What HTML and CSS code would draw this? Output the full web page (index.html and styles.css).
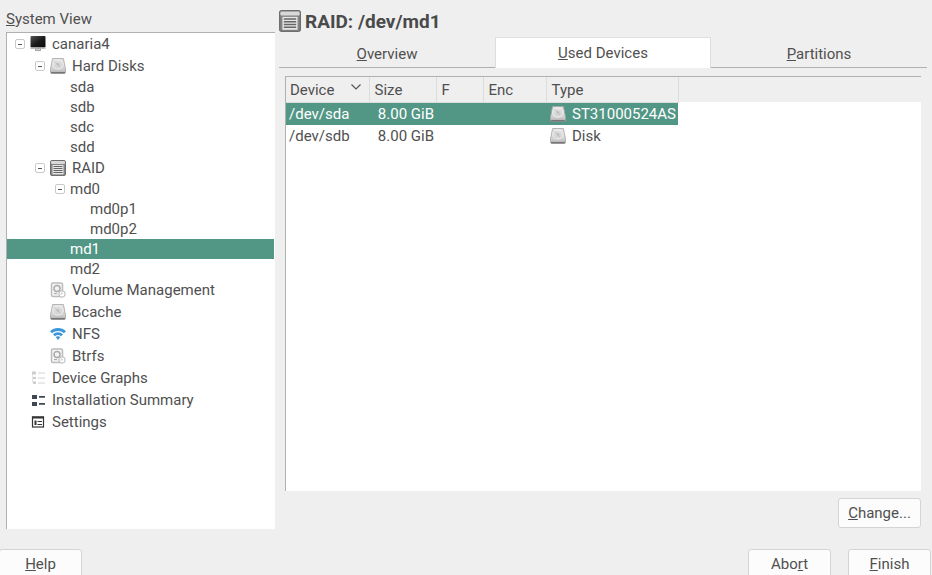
FILE: index.html
```html
<!DOCTYPE html>
<html lang="en">
<head>
  <meta charset="UTF-8">
  <title>Partitioner</title>
  <link rel="stylesheet" href="styles.css">
</head>
<body>
  <!-- Icon sprite -->
  <svg class="sprite" xmlns="http://www.w3.org/2000/svg">
    <defs>
      <linearGradient id="diskFill" x1="0" y1="0" x2="0" y2="1">
        <stop offset="0" stop-color="#e4e4e4"/>
        <stop offset="0.7" stop-color="#d2d2d2"/>
        <stop offset="1" stop-color="#aeaeae"/>
      </linearGradient>
      <linearGradient id="screenFill" x1="0" y1="0" x2="1" y2="1">
        <stop offset="0" stop-color="#555"/>
        <stop offset="0.5" stop-color="#1c1c1c"/>
        <stop offset="1" stop-color="#0c0c0c"/>
      </linearGradient>
      <symbol id="i-disk" viewBox="0 0 16 16">
        <path d="M2.600.500h10.800L15.500 11v3.300a1 1 0 0 1-1 1h-13a1 1 0 0 1-1-1V11z" fill="url(#diskFill)" stroke="#a6a6a6" stroke-width=".8"/>
        <ellipse cx="8" cy="6.400" rx="5.200" ry="4.600" fill="none" stroke="#f0f0f0" stroke-width=".9"/>
        <ellipse cx="8" cy="6.400" rx="1.600" ry="1.300" fill="#c4c4c4"/>
        <path d="M4.500 3 10 9" stroke="#b4b4b4" stroke-width=".6"/>
        <rect x="1" y="14" width="14" height="1.500" rx=".5" fill="#757575"/>
      </symbol>
      <symbol id="i-monitor" viewBox="0 0 16 16">
        <rect x=".5" y="0" width="15" height="11.5" rx="1" fill="url(#screenFill)"/>
        <rect x=".5" y="11.5" width="15" height="1.5" fill="#bdbdbd"/>
        <path d="M5.500 13h5v1.600h-5z" fill="none" stroke="#8a8a8a" stroke-width=".8"/>
      </symbol>
      <symbol id="i-raid" viewBox="0 0 16 16">
        <rect x=".5" y=".5" width="15" height="15" rx="1.500" fill="#858585" stroke="#6e6e6e"/>
        <rect x="1" y="1" width="14" height="3" rx="1" fill="#d8d8d8"/>
        <rect x="2.500" y="5" width="11" height="9.400" fill="#e6e6e6"/>
        <path d="M3.500 6.500h9M3.500 8.500h9M3.500 10.500h9M3.500 12.500h9" stroke="#666" stroke-width="1"/>
      </symbol>
      <symbol id="i-volume" viewBox="0 0 16 16">
        <rect x="1.500" y="1" width="11" height="13.500" rx="1.500" fill="#f4f4f4" stroke="#bcbcbc" stroke-width="1.500"/>
        <circle cx="7" cy="6.500" r="3" fill="none" stroke="#ababab" stroke-width="1.500"/>
        <path d="M4 11.500h3" stroke="#ababab" stroke-width="1.200"/>
        <circle cx="12" cy="12" r="3.200" fill="#fff" stroke="#b4b4b4" stroke-width="1"/>
        <path d="M12 10.500v1.500h-1.500" fill="none" stroke="#b4b4b4" stroke-width=".8"/>
      </symbol>
      <symbol id="i-wifi" viewBox="0 0 16 16">
        <path d="M0 5.300C4.500 1 11.500 1 16 5.300l-2.100 2C10.500 4.200 5.500 4.200 2.100 7.300z" fill="#3a97da"/>
        <path d="M3 8.300c3-2.700 7-2.700 10 0l-2 1.900c-1.900-1.500-4.100-1.500-6 0z" fill="#3a97da"/>
        <path d="M5.700 11c1.400-1 3.200-1 4.600 0L8 14z" fill="#3a97da"/>
      </symbol>
      <symbol id="i-graphs" viewBox="0 0 16 16">
        <path d="M2 1.500h4v3H2zM3 7h3v2H3zM3 11.500h3v2.500H3z" fill="#cdcdcd"/>
        <path d="M8 3h7M8 8h7M8 13h7" stroke="#d2d2d2" stroke-width="1"/>
        <path d="M2.500 4.500v8" stroke="#dcdcdc" stroke-width=".8"/>
      </symbol>
      <symbol id="i-summary" viewBox="0 0 16 16">
        <path d="M2 3h5v4H2zM2 10h5v4H2z" fill="#3f4852"/>
        <path d="M9 4h6v1.800H9zM9 11h6v1.800H9z" fill="#3f4852"/>
      </symbol>
      <symbol id="i-settings" viewBox="0 0 16 16">
        <rect x="2.500" y="3" width="11" height="10" fill="#fff" stroke="#333" stroke-width="1.200"/>
        <path d="M2 2.500h12v2H2z" fill="#333"/>
        <path d="M4.500 6.500h2v4.500h-2z" fill="#333"/>
        <path d="M7.500 7.500h4.500M7.500 10.500h4.500" stroke="#333" stroke-width="1"/>
      </symbol>
    </defs>
  </svg>

  <div class="main">
    <!-- Left side tree -->
    <div class="side">
      <div class="side-label"><u>S</u>ystem View</div>
      <div class="tree">
        <div class="row tall d0"><span class="exp"></span><svg class="ico"><use href="#i-monitor"/></svg>canaria4</div>
        <div class="row tall d1"><span class="exp"></span><svg class="ico"><use href="#i-disk"/></svg>Hard Disks</div>
        <div class="row d2"><span class="slot"></span>sda</div>
        <div class="row d2"><span class="slot"></span>sdb</div>
        <div class="row d2"><span class="slot"></span>sdc</div>
        <div class="row d2"><span class="slot"></span>sdd</div>
        <div class="row tall d1"><span class="exp"></span><svg class="ico"><use href="#i-raid"/></svg>RAID</div>
        <div class="row d2"><span class="exp"></span>md0</div>
        <div class="row d3"><span class="slot"></span>md0p1</div>
        <div class="row d3"><span class="slot"></span>md0p2</div>
        <div class="row d2 selected"><span class="slot"></span>md1</div>
        <div class="row d2"><span class="slot"></span>md2</div>
        <div class="row tall d1"><span class="slot"></span><svg class="ico"><use href="#i-volume"/></svg>Volume Management</div>
        <div class="row tall d1"><span class="slot"></span><svg class="ico"><use href="#i-disk"/></svg>Bcache</div>
        <div class="row tall d1"><span class="slot"></span><svg class="ico"><use href="#i-wifi"/></svg>NFS</div>
        <div class="row tall d1"><span class="slot"></span><svg class="ico"><use href="#i-volume"/></svg>Btrfs</div>
        <div class="row tall d0"><span class="slot"></span><svg class="ico"><use href="#i-graphs"/></svg>Device Graphs</div>
        <div class="row tall d0"><span class="slot"></span><svg class="ico"><use href="#i-summary"/></svg>Installation Summary</div>
        <div class="row tall d0"><span class="slot"></span><svg class="ico"><use href="#i-settings"/></svg>Settings</div>
      </div>
    </div>

    <!-- Right side content -->
    <div class="content">
      <div class="heading"><svg class="heading-ico"><use href="#i-raid"/></svg><h1>RAID: /dev/md1</h1></div>
      <div class="tabs">
        <div class="tab"><u>O</u>verview</div>
        <div class="tab active"><u>U</u>sed Devices</div>
        <div class="tab"><u>P</u>artitions</div>
      </div>
      <div class="panel">
        <div class="table-frame">
          <table class="devices">
            <thead>
              <tr>
                <th class="c-device">Device<svg class="sort" viewBox="0 0 10 6"><path d="M.5.500 5 5 9.500.500" fill="none" stroke="#555" stroke-width="1.200"/></svg></th>
                <th class="c-size">Size</th>
                <th class="c-f">F</th>
                <th class="c-enc">Enc</th>
                <th class="c-type">Type</th>
                <th class="c-fill"></th>
              </tr>
            </thead>
            <tbody>
              <tr class="selected">
                <td class="t-device">/dev/sda</td>
                <td class="t-size">8.00 GiB</td>
                <td></td>
                <td></td>
                <td class="t-type"><svg class="ico"><use href="#i-disk"/></svg>ST31000524AS</td>
                <td class="t-fill"></td>
              </tr>
              <tr>
                <td class="t-device">/dev/sdb</td>
                <td class="t-size">8.00 GiB</td>
                <td></td>
                <td></td>
                <td class="t-type"><svg class="ico"><use href="#i-disk"/></svg>Disk</td>
                <td class="t-fill"></td>
              </tr>
            </tbody>
          </table>
        </div>
        <div class="actions"><button class="btn btn-change"><u>C</u>hange...</button></div>
      </div>
    </div>
  </div>

  <div class="footer">
    <button class="btn btn-help"><u>H</u>elp</button>
    <div class="footer-right">
      <button class="btn btn-wide">Abo<u>r</u>t</button>
      <button class="btn btn-wide"><u>F</u>inish</button>
    </div>
  </div>
</body>
</html>
```

FILE: styles.css
```css
:root {
  --bg: #efefef;
  --text: #505050;
  --select: #529685;
  --line: #b0b0b0;
}

html, body {
  margin: 0;
  padding: 0;
  height: 575px;
  overflow: hidden;
}

body {
  background: var(--bg);
  color: var(--text);
  font-family: Roboto, sans-serif;
  font-size: 15px;
}

.sprite {
  position: absolute;
  width: 0;
  height: 0;
}

.main {
  display: flex;
  height: 529px;
}

/* Left tree */
.side {
  width: 269px;
  margin-left: 6px;
  flex: none;
}

.side-label {
  height: 32px;
  line-height: 38px;
}

.tree {
  height: 497px;
  box-sizing: border-box;
  background: #fff;
  border-top: 1px solid var(--line);
  border-left: 1px solid var(--line);
}

.row {
  display: flex;
  align-items: center;
  height: 20px;
  white-space: nowrap;
}

.row.tall {
  height: 22px;
}

.row.selected {
  background: var(--select);
  color: #fff;
  margin-right: 1px;
}

.d0 { padding-left: 8px; }
.d1 { padding-left: 28px; }
.d2 { padding-left: 48px; }
.d3 { padding-left: 68px; }

.slot {
  width: 15px;
  flex: none;
}

.exp {
  width: 15px;
  height: 10px;
  flex: none;
  position: relative;
}

.exp::before {
  content: '';
  position: absolute;
  left: 0;
  top: 0;
  width: 8px;
  height: 8px;
  border: 1px solid #c9c9c9;
  border-radius: 2px;
}

.exp::after {
  content: '';
  position: absolute;
  left: 3px;
  top: 5px;
  width: 4px;
  height: 1px;
  background: #555;
}

.ico {
  width: 16px;
  height: 16px;
  margin-right: 6px;
  flex: none;
}

/* Right side */
.content {
  flex: 1;
  margin-left: 4px;
  margin-right: 5px;
}

.heading {
  display: flex;
  align-items: center;
  height: 37px;
  padding-top: 5px;
  box-sizing: border-box;
}

.heading-ico {
  width: 22px;
  height: 22px;
  margin-right: 4px;
}

.heading h1 {
  margin: 0;
  font-size: 19px;
  font-weight: 700;
  color: #4a4a4a;
}

.tabs {
  display: flex;
  height: 31px;
  box-sizing: border-box;
  border-bottom: 1px solid var(--line);
}

.tab {
  width: 216px;
  flex: none;
  box-sizing: border-box;
  text-align: center;
  line-height: 34px;
}

.tab.active {
  background: #fff;
  height: 31px;
  line-height: 31px;
  border: 1px solid #dedede;
  border-bottom: none;
}

.panel {
  padding: 8px 6px 0;
}

.table-frame {
  height: 415px;
  box-sizing: border-box;
  background: #fff;
  border-top: 1px solid var(--line);
  border-left: 1px solid var(--line);
}

.devices {
  width: 100%;
  border-collapse: collapse;
  table-layout: fixed;
}

.devices th {
  height: 25px;
  padding: 1px 0 0 5px;
  box-sizing: border-box;
  background: var(--bg);
  border-right: 1px solid #dcdcdc;
  border-bottom: 1px solid #dcdcdc;
  font-weight: 400;
  text-align: left;
  position: relative;
}

.devices th.c-device {
  padding-left: 4px;
}

.devices th.c-fill {
  border-right: none;
  border-bottom: none;
}

.c-device { width: 83px; }
.c-size { width: 67px; }
.c-f { width: 47px; }
.c-enc { width: 63px; }
.c-type { width: 132px; }

.sort {
  position: absolute;
  right: 8px;
  top: 7px;
  width: 10px;
  height: 6px;
}

.devices td {
  height: 22px;
  padding: 0;
  white-space: nowrap;
}

.devices tr.selected td {
  background: var(--select);
  color: #fff;
}

.devices tr.selected td.t-fill {
  background: #fff;
}

.devices td.t-device {
  padding-left: 3px;
}

.devices td.t-size {
  text-align: right;
  padding-right: 2px;
}

.devices td.t-type {
  padding-left: 4px;
}

.devices td.t-type .ico {
  vertical-align: -3px;
}

.actions {
  display: flex;
  justify-content: flex-end;
  margin-top: 7px;
}

.btn {
  height: 30px;
  padding: 0;
  box-sizing: border-box;
  background: #fcfcfc;
  border: 1px solid #d4d4d4;
  border-radius: 3px;
  color: var(--text);
  font-family: inherit;
  font-size: 15px;
}

.btn-change { width: 83px; }
.btn-help { width: 83px; margin-left: -1px; }
.btn-wide { width: 83px; }

/* Bottom buttons */
.footer {
  display: flex;
  justify-content: space-between;
  margin-top: 20px;
  padding-right: 1px;
}

.footer-right {
  display: flex;
  gap: 17px;
}
```
